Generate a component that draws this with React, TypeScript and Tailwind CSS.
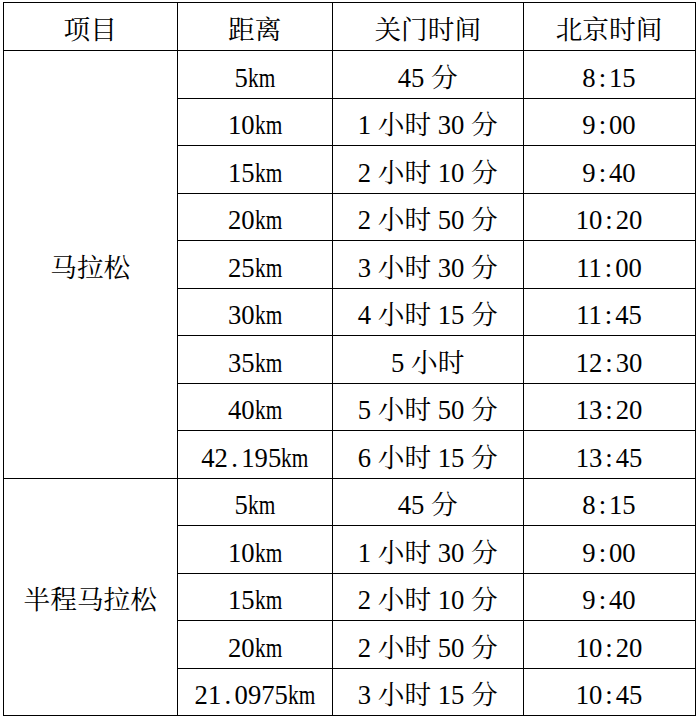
import React from "react";

const font = {
  fontFamily:
    '"Liberation Serif", "Noto Serif CJK SC", "Noto Sans CJK SC", serif',
};

const marathon: [string, string, string][] = [
  ["5km", "45 分", "8:15"],
  ["10km", "1 小时 30 分", "9:00"],
  ["15km", "2 小时 10 分", "9:40"],
  ["20km", "2 小时 50 分", "10:20"],
  ["25km", "3 小时 30 分", "11:00"],
  ["30km", "4 小时 15 分", "11:45"],
  ["35km", "5 小时", "12:30"],
  ["40km", "5 小时 50 分", "13:20"],
  ["42.195km", "6 小时 15 分", "13:45"],
];

const half: [string, string, string][] = [
  ["5km", "45 分", "8:15"],
  ["10km", "1 小时 30 分", "9:00"],
  ["15km", "2 小时 10 分", "9:40"],
  ["20km", "2 小时 50 分", "10:20"],
  ["21.0975km", "3 小时 15 分", "10:45"],
];

function Fmt({ s }: { s: string }) {
  const parts = s.split(/(km|\.|:)/).filter((p) => p !== "");
  return (
    <span className="whitespace-nowrap">
      {parts.map((p, i) => {
        if (p === "." || p === ":")
          return (
            <span key={i} className="inline-block w-[13.33px] text-center">
              {p}
            </span>
          );
        if (p === "km")
          return (
            <span key={i} className="inline-block w-[27px] text-left">
              <span className="inline-block scale-x-[0.8] origin-left">km</span>
            </span>
          );
        return <span key={i}>{p}</span>;
      })}
    </span>
  );
}

const cell =
  "border border-black text-center align-middle p-0 pt-[8px] leading-none";

function Group({ name, rows }: { name: string; rows: [string, string, string][] }) {
  return (
    <>
      {rows.map((r, i) => (
        <tr key={i} className="h-[47.5px]">
          {i === 0 && (
            <td rowSpan={rows.length} className={cell}>
              {name}
            </td>
          )}
          <td className={cell}>
            <Fmt s={r[0]} />
          </td>
          <td className={cell}>{r[1]}</td>
          <td className={cell}>
            <Fmt s={r[2]} />
          </td>
        </tr>
      ))}
    </>
  );
}

export default function App() {
  return (
    <div className="bg-white w-[699px] h-[720px] pl-[3px] pt-[2px]" style={font}>
      <table className="border-collapse text-[26.67px] text-black table-fixed w-[692px]">
        <colgroup>
          <col className="w-[173.5px]" />
          <col className="w-[155.5px]" />
          <col className="w-[190.5px]" />
          <col className="w-[172px]" />
        </colgroup>
        <thead>
          <tr className="h-[48px]">
            <th className={cell + " font-normal"}>项目</th>
            <th className={cell + " font-normal"}>距离</th>
            <th className={cell + " font-normal"}>关门时间</th>
            <th className={cell + " font-normal"}>北京时间</th>
          </tr>
        </thead>
        <tbody>
          <Group name="马拉松" rows={marathon} />
          <Group name="半程马拉松" rows={half} />
        </tbody>
      </table>
    </div>
  );
}
